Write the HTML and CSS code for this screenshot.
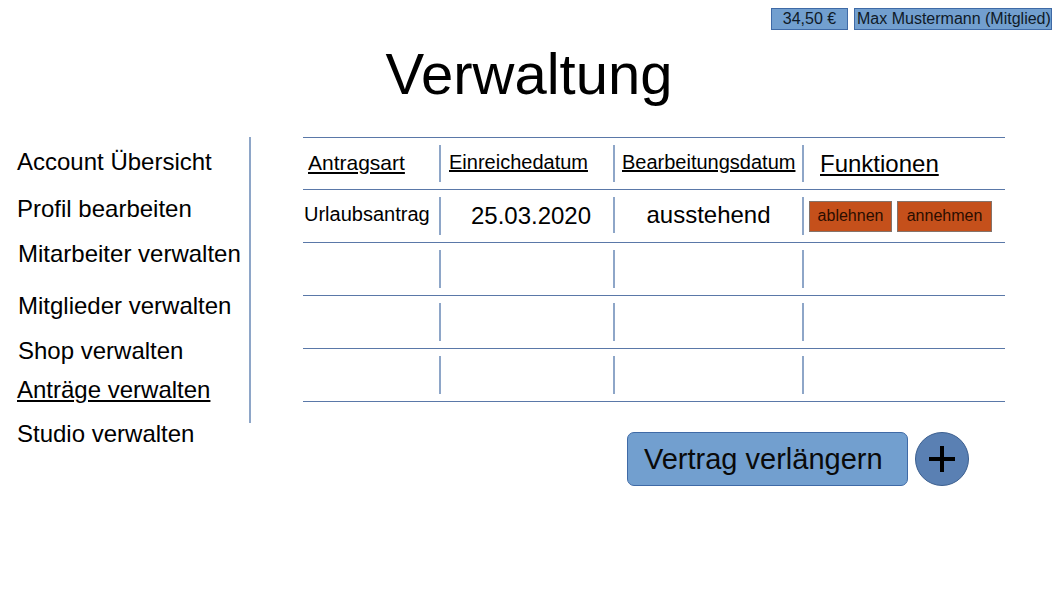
FILE: index.html
```html
<!DOCTYPE html>
<html lang="de">
<head>
<meta charset="utf-8">
<title>Verwaltung</title>
<link rel="stylesheet" href="styles.css">
</head>
<body>
<header class="topbar">
  <span class="badge badge-balance">34,50 €</span>
  <span class="badge badge-user">Max Mustermann (Mitglied)</span>
</header>
<h1 class="title">Verwaltung</h1>
<main class="layout">
  <nav class="sidebar">
    <a class="nav-item">Account Übersicht</a>
    <a class="nav-item gap-md">Profil bearbeiten</a>
    <a class="nav-item shift">Mitarbeiter verwalten</a>
    <a class="nav-item gap-lg shift">Mitglieder verwalten</a>
    <a class="nav-item shift">Shop verwalten</a>
    <a class="nav-item active gap-sm">Anträge verwalten</a>
    <a class="nav-item gap-xs">Studio verwalten</a>
  </nav>
  <div class="divider"></div>
  <section class="content">
    <div class="table">
      <div class="row row-head">
        <div class="cell h1c"><span class="head">Antragsart</span></div>
        <div class="cell h2c"><span class="head">Einreichedatum</span></div>
        <div class="cell h3c"><span class="head">Bearbeitungsdatum</span></div>
        <div class="cell h4c"><span class="head head-lg">Funktionen</span></div>
      </div>
      <div class="row">
        <div class="cell d1c"><span class="val-sm">Urlaubsantrag</span></div>
        <div class="cell d2c"><span class="val">25.03.2020</span></div>
        <div class="cell d3c"><span class="val">ausstehend</span></div>
        <div class="cell d4c">
          <button class="btn-small btn-reject">ablehnen</button>
          <button class="btn-small btn-accept">annehmen</button>
        </div>
      </div>
      <div class="row">
        <div class="cell"></div><div class="cell"></div><div class="cell"></div><div class="cell"></div>
      </div>
      <div class="row">
        <div class="cell"></div><div class="cell"></div><div class="cell"></div><div class="cell"></div>
      </div>
      <div class="row">
        <div class="cell"></div><div class="cell"></div><div class="cell"></div><div class="cell"></div>
      </div>
    </div>
    <div class="actions">
      <button class="btn-main">Vertrag verlängern</button>
      <button class="btn-add" aria-label="Hinzufügen">
        <svg width="30" height="30" viewBox="0 0 30 30"><path d="M15 2v26M2 15h26" stroke="#000" stroke-width="4" fill="none"/></svg>
      </button>
    </div>
  </section>
</main>
</body>
</html>
```

FILE: styles.css
```css
* { box-sizing: border-box; }

body {
  margin: 0;
  font-family: "Liberation Sans", Arial, sans-serif;
  color: #000;
  background: #fff;
}

.topbar {
  display: flex;
  justify-content: flex-end;
  gap: 6px;
  padding: 8px 6px 0 0;
}

.badge {
  display: flex;
  align-items: center;
  height: 22px;
  background: #729fcf;
  border: 1px solid #3f6aa6;
  font-size: 16px;
  color: #0f1a28;
  white-space: nowrap;
}

.badge-balance {
  width: 77px;
  justify-content: center;
}

.badge-user {
  width: 198px;
  padding-left: 2px;
}

.title {
  margin: 12px 0 0;
  font-size: 58px;
  line-height: 64px;
  font-weight: normal;
  text-align: center;
}

.layout {
  display: flex;
  align-items: flex-start;
  margin-top: 31px;
}

.sidebar {
  width: 249px;
  padding: 11px 0 0 17px;
  display: flex;
  flex-direction: column;
}

.nav-item {
  display: block;
  font-size: 24px;
  line-height: 28px;
  white-space: nowrap;
  margin-top: 17px;
}

.nav-item.shift { padding-left: 1px; }

.nav-item:first-child { margin-top: 0; }
.nav-item.gap-md { margin-top: 19px; }
.nav-item.gap-lg { margin-top: 24px; }
.nav-item.gap-sm { margin-top: 11px; }
.nav-item.gap-xs { margin-top: 16px; }

.nav-item.active {
  text-decoration: underline;
}

.divider {
  width: 2px;
  height: 286px;
  background: #8ea6c8;
  flex-shrink: 0;
}

.content {
  margin-left: 52px;
  width: 702px;
}

.table {
  border-bottom: 1px solid #5a78a8;
}

.row {
  display: grid;
  grid-template-columns: 136px 174px 189px 203px;
  height: 53px;
  padding: 7px 0;
  border-top: 1px solid #5a78a8;
}

.row-head {
  height: 52px;
}

.cell {
  display: flex;
  align-items: center;
  border-left: 2px solid #8ea6c8;
}

.cell:first-child {
  border-left: none;
}

.head {
  font-size: 20px;
  line-height: 23px;
  text-decoration: underline;
  white-space: nowrap;
  margin-bottom: 3px;
}

.head-lg {
  font-size: 24px;
  line-height: 28px;
  margin-bottom: 0;
}

.h1c { padding-left: 5px; }
.h1c .head { font-size: 21px; }
.h2c { padding-left: 8px; }
.h3c { padding-left: 7px; }
.h4c { padding-left: 16px; }

.val-sm {
  font-size: 20px;
  line-height: 23px;
  white-space: nowrap;
  margin-bottom: 3px;
}

.val {
  font-size: 24px;
  line-height: 28px;
  white-space: nowrap;
}

.d1c { padding-left: 1px; }
.d2c { justify-content: center; padding-left: 8px; }
.d3c { justify-content: center; margin-bottom: 2px; }
.d4c { padding-left: 5px; gap: 5px; }

.btn-small {
  height: 31px;
  padding: 0;
  background: #c5501b;
  border: 1px solid #85736a;
  border-radius: 0;
  font-family: "Liberation Sans", Arial, sans-serif;
  font-size: 16px;
  color: #2a0d00;
}

.btn-reject { width: 83px; }
.btn-accept { width: 95px; }

.actions {
  display: flex;
  align-items: center;
  gap: 7px;
  margin-top: 30px;
  padding-left: 324px;
}

.btn-main {
  width: 281px;
  height: 54px;
  padding: 0 0 0 16px;
  text-align: left;
  background: #729fcf;
  border: 1px solid #3f6aa6;
  border-radius: 7px;
  font-family: "Liberation Sans", Arial, sans-serif;
  font-size: 29px;
  color: #0a0a0a;
}

.btn-add {
  width: 54px;
  height: 54px;
  padding: 0;
  border-radius: 50%;
  background: #5a80b3;
  border: 1px solid #3c5f8f;
  display: flex;
  align-items: center;
  justify-content: center;
}

.btn-add svg { display: block; }
```
